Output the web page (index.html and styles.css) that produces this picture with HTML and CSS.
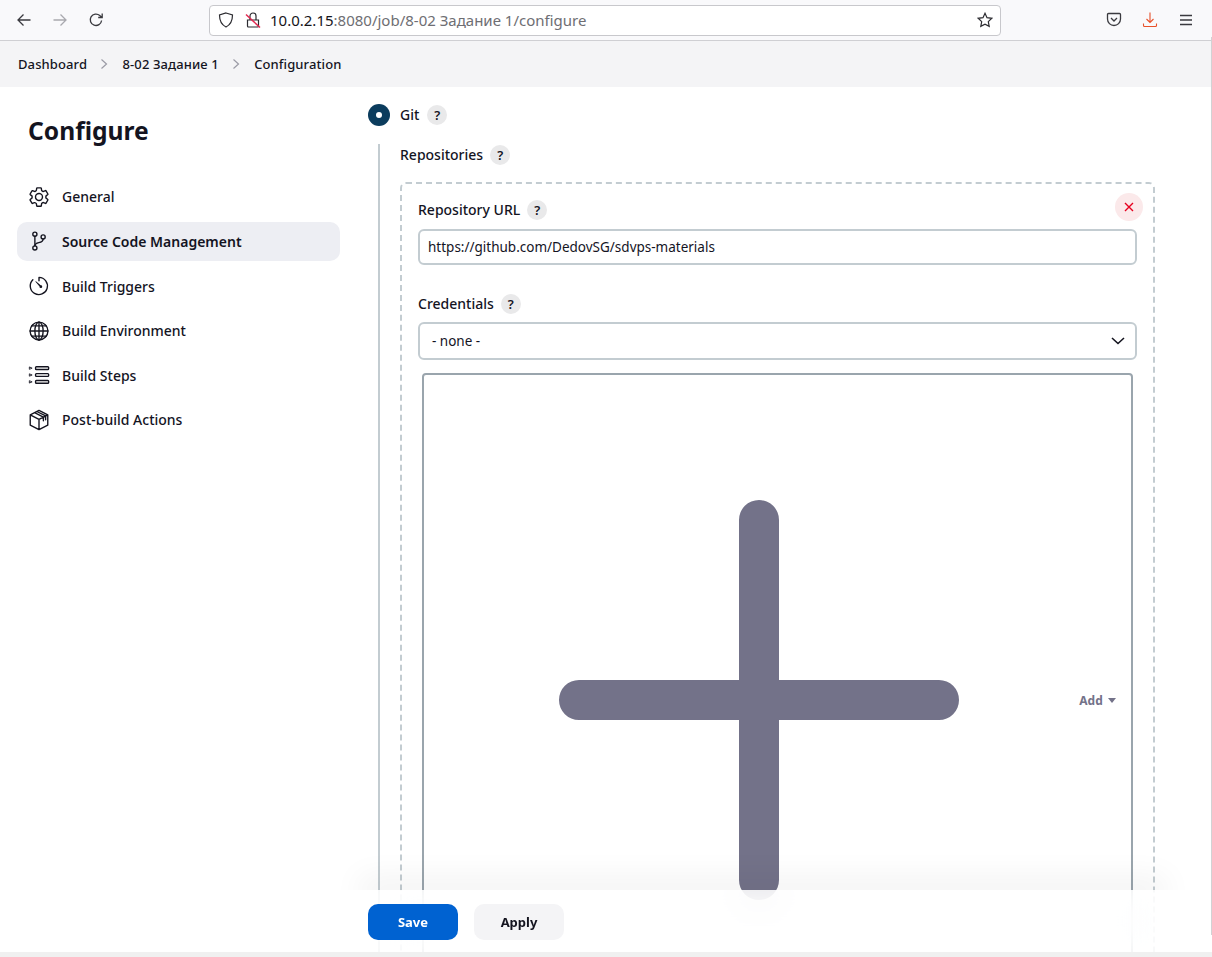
FILE: index.html
```html
<!DOCTYPE html>
<html lang="en">
<head>
	<meta charset="utf-8">
	<title>Jenkins - Configure</title>
	<link rel="stylesheet" href="styles.css">
</head>

<body>
	<div id="window">
		<div id="toolbar">
			<div class="nav-buttons">
				<svg class="tool-icon" viewBox="0 0 16 16"><path d="M14.5 8H2M7.5 2.5 2 8l5.5 5.5"/></svg>
				<svg class="tool-icon faded" viewBox="0 0 16 16"><path d="M1.5 8H14M8.5 2.5 14 8l-5.5 5.5"/></svg>
				<svg class="tool-icon" viewBox="0 0 16 16"><path d="M13.6 8.5A5.7 5.7 0 1 1 11.8 3.6L14 5.5M14.2 1.5v4h-4"/></svg>
			</div>
			<div class="address-bar">
				<svg class="shield-icon" viewBox="0 0 16 16"><path d="M8 1 14.5 3c0 6-1.500 9.500-6.500 12C3 12.500 1.500 9 1.500 3z"/></svg>
				<svg class="lock-icon" viewBox="0 0 16 16">
					<path d="M2.500 8h11v6a1 1 0 0 1-1 1h-9a1 1 0 0 1-1-1zM5 8V4a3 3 0 0 1 6 0v4"/>
					<path class="lock-slash" d="M1 2.500 15 15.500"/>
				</svg>
				<span class="url"><b>10.0.2.15</b>:8080/job/8-02 Задание 1/configure</span>
				<svg class="star-icon" viewBox="0 0 16 16"><path d="m8 1.300 2 4.400 4.800.6-3.500 3.300.9 4.800L8 12.100l-4.200 2.300.9-4.800L1.200 6.300 6 5.700z"/></svg>
			</div>
			<div class="browser-buttons">
				<svg class="tool-icon" viewBox="0 0 16 16"><path d="M2.500 1.500h11a1 1 0 0 1 1 1V7a6.500 6.500 0 0 1-13 0V2.500a1 1 0 0 1 1-1zM5 6l3 3 3-3"/></svg>
				<svg class="tool-icon download" viewBox="0 0 16 16"><path d="M8 .5v10M4.500 7 8 10.500 11.500 7M1.500 11.500v2a1 1 0 0 0 1 1h11a1 1 0 0 0 1-1v-2"/></svg>
				<svg class="tool-icon" viewBox="0 0 16 16"><path d="M2 3.500h12M2 8h12M2 12.500h12"/></svg>
			</div>
		</div>

		<div id="breadcrumbs">
			<a href="#">Dashboard</a>
			<svg class="crumb-arrow" viewBox="0 0 10 12"><path d="M2.500 1.500 7.500 6l-5 4.500"/></svg>
			<a href="#">8-02 Задание 1</a>
			<svg class="crumb-arrow" viewBox="0 0 10 12"><path d="M2.500 1.500 7.500 6l-5 4.500"/></svg>
			<a href="#">Configuration</a>
		</div>

		<div id="page">
			<div id="side-panel">
				<h1>Configure</h1>
				<ul class="task-list">
					<li class="task">
						<svg class="task-icon" viewBox="0 0 512 512"><path d="M262.300 174.500a81.500 81.500 0 1 0-12.600 162.900 81.500 81.500 0 0 0 12.600-162.900zM416.400 256a154 154 0 0 1-1.500 20.900l45.200 35.500a10.800 10.800 0 0 1 2.500 13.700l-42.800 74a10.800 10.800 0 0 1-13.100 4.500l-44.900-18.100a16.200 16.200 0 0 0-15.200 1.800 165 165 0 0 1-21.600 12.600 16 16 0 0 0-8.800 12.200l-6.700 47.900a11.100 11.100 0 0 1-10.700 9.100h-85.600a11.100 11.100 0 0 1-10.700-8.600l-6.700-47.800a16.100 16.100 0 0 0-9.100-12.300 156 156 0 0 1-21.500-12.600 16.100 16.100 0 0 0-15.200-1.800l-44.900 18.100a10.800 10.800 0 0 1-13.100-4.500l-42.800-74a10.800 10.800 0 0 1 2.500-13.700l38.200-30a16.100 16.100 0 0 0 6-14.100 135 135 0 0 1 0-24.900 16 16 0 0 0-6.100-13.900l-38.100-30a10.800 10.800 0 0 1-2.300-13.600l42.800-74a10.800 10.800 0 0 1 13.100-4.500l44.900 18.100a16.200 16.200 0 0 0 15.200-1.800 165 165 0 0 1 21.600-12.600 16 16 0 0 0 8.800-12.200l6.700-47.900a11.100 11.100 0 0 1 10.700-9.100h85.600a11.100 11.100 0 0 1 10.700 8.600l6.700 47.800a16.100 16.100 0 0 0 9.100 12.300 156 156 0 0 1 21.500 12.600 16.100 16.100 0 0 0 15.200 1.800l44.900-18.100a10.800 10.800 0 0 1 13.100 4.500l42.800 74a10.800 10.800 0 0 1-2.500 13.700l-38.200 30a16.100 16.100 0 0 0-6.100 14.100 135 135 0 0 1 .8 12.400z"/></svg>
						General
					</li>
					<li class="task active">
						<svg class="task-icon" viewBox="0 0 512 512"><circle cx="160" cy="96" r="48"/><circle cx="160" cy="416" r="48"/><path d="M160 144v224"/><circle cx="352" cy="160" r="48"/><path d="M352 208c0 128-192 48-192 160"/></svg>
						Source Code Management
					</li>
					<li class="task">
						<svg class="task-icon" viewBox="0 0 512 512"><path d="M112.900 112.900A200 200 0 1 0 256 56v80"/><path d="m268 268-94-110a8 8 0 0 1 11-11l110 94a32 32 0 1 1-27 27z" class="solid"/></svg>
						Build Triggers
					</li>
					<li class="task">
						<svg class="task-icon" viewBox="0 0 512 512"><circle cx="256" cy="256" r="208"/><ellipse cx="256" cy="256" rx="96" ry="208"/><path d="M256 48v416M48 256h416M86 136h340M86 376h340"/></svg>
						Build Environment
					</li>
					<li class="task">
						<svg class="task-icon" viewBox="0 0 512 512"><rect x="176" y="64" width="304" height="64" rx="20"/><rect x="176" y="224" width="304" height="64" rx="20"/><rect x="176" y="384" width="304" height="64" rx="20"/><path class="thin" d="m40 72 56 24-56 24zM40 232l56 24-56 24zM40 392l56 24-56 24z"/></svg>
						Build Steps
					</li>
					<li class="task">
						<svg class="task-icon" viewBox="0 0 512 512"><path d="M256 32 460 136v240L256 480 52 376V136zM52 136l204 104 204-104M256 240v240M154 84l204 104v88M358 188 154 84M206 58l204 104v90"/></svg>
						Post-build Actions
					</li>
				</ul>
			</div>

			<div id="main-panel">
				<div class="radio-row">
					<span class="radio"></span>
					<span class="field-label">Git</span>
					<span class="help">?</span>
				</div>
				<div class="radio-body">
					<div class="label-row">
						<span class="field-label">Repositories</span>
						<span class="help">?</span>
					</div>
					<div class="repeated-chunk">
						<button class="delete-button" type="button">
							<svg viewBox="0 0 12 12"><path d="m2 2 8 8M10 2l-8 8"/></svg>
						</button>
						<div class="label-row">
							<span class="field-label">Repository URL</span>
							<span class="help">?</span>
						</div>
						<input class="text-input" type="text" value="https://github.com/DedovSG/sdvps-materials">

						<div class="label-row credentials-label">
							<span class="field-label">Credentials</span>
							<span class="help">?</span>
						</div>
						<div class="select-box">
							<span>- none -</span>
							<svg viewBox="0 0 14 8"><path d="m1 1 6 5.500L13 1"/></svg>
						</div>
						<button class="add-button" type="button">
							<svg class="huge-plus" viewBox="0 0 512 512"><path d="M256 112v288M400 256H112"/></svg>
							<span>Add</span>
							<span class="caret"></span>
						</button>
					</div>
				</div>
			</div>

			<div id="bottom-bar">
				<button class="save-button" type="button">Save</button>
				<button class="apply-button" type="button">Apply</button>
			</div>
		</div>

		<div id="scroll-thumb"></div>
	</div>
</body>

</html>
```

FILE: styles.css
```css
html {
	box-sizing: border-box;
}
*,
*::before,
*::after {
	box-sizing: inherit;
}

body {
	background-color: #fff;
	color: #14141f;
	font-family: "Noto Sans", "Open Sans", sans-serif;
	font-size: 14px;
	margin: 0;
	overflow: hidden;
	padding: 0;
}

svg {
	display: block;
	fill: none;
	stroke: currentColor;
}

button {
	font-family: inherit;
}

#window {
	border-bottom: 5px solid #f0f0f0;
	display: flex;
	flex-direction: column;
	height: 957px;
	overflow: hidden;
	position: relative;
	width: 1212px;
}

#scroll-thumb {
	background-color: #d2d2d4;
	height: 898px;
	position: absolute;
	right: 0;
	top: 37px;
	width: 1px;
}

/* browser chrome */
#toolbar {
	align-items: center;
	background-color: #f9f9fb;
	border-bottom: 1px solid #cfcfd3;
	display: flex;
	flex: none;
	height: 41px;
}

.nav-buttons,
.browser-buttons {
	align-items: center;
	display: flex;
	gap: 20px;
}

.nav-buttons {
	padding-left: 16px;
	width: 209px;
}

.browser-buttons {
	padding-left: 105px;
}

.tool-icon {
	color: #3a3a3f;
	height: 16px;
	stroke-width: 1.3;
	width: 16px;
}

.tool-icon.faded {
	color: #a9a9ae;
}

.tool-icon.download {
	color: #e8512a;
	stroke-width: 1.1;
}

.address-bar {
	align-items: center;
	background-color: #fff;
	border: 1px solid #c8c8cc;
	border-radius: 4px;
	display: flex;
	height: 31px;
	padding: 0 7px 0 8px;
	width: 792px;
}

.shield-icon,
.lock-icon,
.star-icon {
	color: #2b2b30;
	height: 16px;
	stroke-width: 1.2;
	width: 16px;
}

.lock-icon {
	margin-left: 11px;
}

.lock-slash {
	stroke: #e22850;
	stroke-width: 1.5;
}

.url {
	color: #6e6e73;
	flex: 1;
	font-size: 15px;
	margin-left: 9px;
}

.url b {
	color: #15141a;
	font-weight: 400;
}

/* breadcrumbs */
#breadcrumbs {
	align-items: center;
	background-color: #f4f4f6;
	display: flex;
	flex: none;
	font-size: 13px;
	font-weight: 500;
	height: 46px;
	letter-spacing: 0.1px;
	padding-left: 18px;
}

#breadcrumbs a {
	color: #14141f;
	text-decoration: none;
}

.crumb-arrow {
	color: #9a9aa5;
	height: 12px;
	margin: 0 13.5px 0 12px;
	stroke-width: 1.2;
	width: 10px;
}

/* layout */
#page {
	display: flex;
	flex: 1;
	min-height: 0;
	position: relative;
}

#side-panel {
	flex: none;
	padding: 0 0 0 17px;
	width: 368px;
}

h1 {
	font-size: 24.6px;
	font-weight: 700;
	line-height: 34px;
	margin: 27px 0 29.4px 11px;
	padding: 0;
}

.task-list {
	display: flex;
	flex-direction: column;
	gap: 5.6px;
	list-style: none;
	margin: 0;
	padding: 0;
	width: 323px;
}

.task {
	align-items: center;
	border-radius: 10px;
	display: flex;
	font-weight: 500;
	gap: 12px;
	height: 39px;
	padding-left: 11px;
}

.task.active {
	background-color: #edeef3;
	font-weight: 600;
}

.task-icon {
	height: 22px;
	stroke-linecap: round;
	stroke-linejoin: round;
	stroke-width: 32;
	width: 22px;
}

.task-icon .solid {
	fill: currentColor;
	stroke: none;
}

.task-icon .thin {
	stroke-width: 20;
}

#main-panel {
	flex: 1;
	min-width: 0;
	padding-top: 17px;
}

/* form */
.field-label {
	font-weight: 500;
	line-height: 19px;
	padding-bottom: 1px;
}

.help {
	align-items: center;
	background-color: #e9e9ea;
	border-radius: 50%;
	display: flex;
	font-size: 13px;
	font-weight: 600;
	height: 20px;
	justify-content: center;
	width: 20px;
}

.label-row,
.radio-row {
	align-items: center;
	display: flex;
	gap: 7px;
}

.radio-row {
	gap: 10px;
}

.radio-row .help {
	margin-left: -2px;
}

.radio {
	background-color: #0b3c5d;
	border-radius: 50%;
	height: 22px;
	position: relative;
	width: 22px;
}

.radio::after {
	background-color: #fff;
	border-radius: 50%;
	content: "";
	height: 6px;
	left: 8px;
	position: absolute;
	top: 8px;
	width: 6px;
}

.radio-body {
	border-left: 2px solid #c3ccd1;
	margin: 18px 0 0 10px;
	padding: 1px 0 0 20px;
	width: 786px;
}

.repeated-chunk {
	border: 2px dashed #c3ccd1;
	border-radius: 6px;
	margin: 17px 0 0;
	padding: 16px 16px 16px;
	position: relative;
	width: 755px;
}

.delete-button {
	align-items: center;
	background-color: #fbe9ea;
	border: none;
	border-radius: 50%;
	color: #e6001f;
	display: flex;
	height: 28px;
	justify-content: center;
	padding: 0;
	position: absolute;
	right: 10px;
	top: 9px;
	width: 28px;
}

.delete-button svg {
	height: 12px;
	stroke-width: 1.4;
	width: 12px;
}

.text-input {
	border: 2px solid #c3ccd1;
	border-radius: 6px;
	color: #14141f;
	display: block;
	font-family: inherit;
	font-size: 13.5px;
	height: 36px;
	margin: 9px 0 0;
	outline: none;
	padding: 0 8px;
	width: 719px;
}

.credentials-label {
	margin-top: 29px;
}

.select-box {
	align-items: center;
	border: 2px solid #c3ccd1;
	border-radius: 6px;
	display: flex;
	font-size: 13.5px;
	height: 38px;
	justify-content: space-between;
	margin-top: 8px;
	padding: 0 10px 0 12px;
	width: 719px;
}

.select-box svg {
	height: 8px;
	stroke-width: 1.6;
	width: 14px;
}

.add-button {
	align-items: center;
	background-color: #fff;
	border: 2px solid #9aa5ad;
	border-radius: 4px;
	color: #737289;
	display: flex;
	font-size: 12px;
	font-weight: 700;
	justify-content: center;
	margin: 13px 0 0 4px;
	padding: 5px 15px;
	width: 711px;
}

.huge-plus {
	flex: none;
	height: 640px;
	stroke-linecap: round;
	stroke-width: 32;
	width: 640px;
}

.caret {
	border-left: 4.5px solid transparent;
	border-right: 4.5px solid transparent;
	border-top: 5px solid #737289;
	margin-left: 5px;
}

/* sticky save bar */
#bottom-bar {
	-webkit-backdrop-filter: blur(20px);
	backdrop-filter: blur(20px);
	background-color: rgba(255, 255, 255, 0.8);
	bottom: 0;
	display: flex;
	gap: 16px;
	height: 62px;
	left: 368px;
	padding-top: 14px;
	position: absolute;
	width: 800px;
}

#bottom-bar::before {
	bottom: 100%;
	box-shadow: 0 0 30px 14px rgba(0, 0, 0, 0.05);
	clip-path: inset(-50px -50px 0 -50px);
	content: "";
	height: 0;
	left: 5px;
	position: absolute;
	right: 15px;
}

#bottom-bar button {
	border: none;
	border-radius: 10px;
	font-size: 13px;
	font-weight: 700;
	height: 36px;
	width: 90px;
}

.save-button {
	background-color: #0062d1;
	color: #fff;
}

.apply-button {
	background-color: #f4f4f6;
	color: #14141f;
}
```
